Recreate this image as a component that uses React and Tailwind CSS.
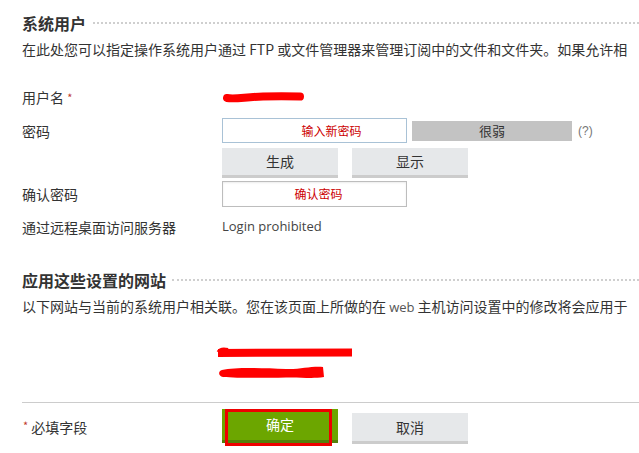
export default function App() {
  return (
    <div className="w-[639px] h-[453px] overflow-hidden bg-white text-[#333] font-['Noto_Sans_CJK_SC','Noto_Sans',sans-serif]">
      <div className="pl-[22px]">
        {/* Section 1 heading */}
        <div className="mt-[14px] h-[18px] flex items-center">
          <span className="text-[16px] leading-[18px] font-bold text-[#333]">系统用户</span>
          <div className="flex-1 ml-[7px] border-t-2 border-dotted border-[#cfcfcf]" />
        </div>
        <div className="mt-[7px] h-[20px] leading-[20px] text-[14px] whitespace-nowrap overflow-hidden text-[#333]">
          在此处您可以指定操作系统用户通过 FTP 或文件管理器来管理订阅中的文件和文件夹。如果允许相
        </div>

        {/* Username */}
        <div className="mt-[28px] h-[20px] flex items-center">
          <div className="w-[200px] text-[14px] leading-[20px]">
            用户名 <span className="text-[#c0392b] text-[11px] align-top">*</span>
          </div>
          <svg width="82" height="14" viewBox="0 0 82 14" className="ml-[1px]">
            <path d="M4 8 C 12 9.5, 22 7, 40 6.5 C 55 6, 68 6.2, 77 6.5" stroke="#ff0000" strokeWidth="8" strokeLinecap="round" fill="none" />
          </svg>
        </div>

        {/* Password */}
        <div className="mt-[11px] h-[25px] flex items-center">
          <div className="w-[200px] text-[14px] leading-[20px]">密码</div>
          <div className="w-[185px] h-[25px] border border-[#a9c2d6] bg-white flex items-center justify-center pl-[34px] text-[12px] text-[#cc0000]">
            输入新密码
          </div>
          <div className="ml-[5px] w-[160px] h-[20px] bg-[#c3c3c3] flex items-center justify-center text-[13px] text-[#333]">
            很弱
          </div>
          <span className="ml-[6px] text-[12px] text-[#777] font-['Liberation_Sans',sans-serif]">(?)</span>
        </div>

        {/* Generate / Show */}
        <div className="mt-[5px] h-[30px] flex">
          <div className="w-[200px]" />
          <div className="w-[116px] h-[30px] bg-[#e6e8ea] border-b-[3px] border-[#cccccc] flex items-center justify-center text-[14px] text-[#333]">
            生成
          </div>
          <div className="ml-[14px] w-[116px] h-[30px] bg-[#e6e8ea] border-b-[3px] border-[#cccccc] flex items-center justify-center text-[14px] text-[#333]">
            显示
          </div>
        </div>

        {/* Confirm */}
        <div className="mt-[3px] h-[26px] flex items-center">
          <div className="w-[200px] text-[14px] leading-[20px]">确认密码</div>
          <div className="w-[185px] h-[26px] border border-[#bdbdbd] bg-white shadow-[inset_0_1px_2px_rgba(0,0,0,0.08)] flex items-center justify-center pl-[8px] text-[12px] text-[#cc0000]">
            确认密码
          </div>
        </div>

        {/* Remote desktop */}
        <div className="mt-[10px] h-[20px] flex items-center">
          <div className="w-[200px] text-[14px] leading-[20px]">通过远程桌面访问服务器</div>
          <div className="text-[13px] text-[#444] font-['Open_Sans',sans-serif]">Login prohibited</div>
        </div>

        {/* Section 2 heading */}
        <div className="mt-[34px] h-[18px] flex items-center">
          <span className="text-[16px] leading-[18px] font-bold text-[#333]">应用这些设置的网站</span>
          <div className="flex-1 ml-[6px] border-t-2 border-dotted border-[#cfcfcf]" />
        </div>
        <div className="mt-[7px] h-[20px] leading-[20px] text-[14px] whitespace-nowrap overflow-hidden text-[#333]">
          以下网站与当前的系统用户相关联。您在该页面上所做的在 <span className="text-[#555] font-['Open_Sans',sans-serif] text-[13px]">web</span> 主机访问设置中的修改将会应用于
        </div>

        {/* Redacted sites */}
        <div className="mt-[31px] h-[34px] ml-[194px]">
          <svg width="140" height="34" viewBox="0 0 140 34">
            <path d="M2 6 L136 5.5" stroke="#ff0000" strokeWidth="8" strokeLinecap="butt" fill="none" />
            <path d="M2 5 C 4 1.5, 8 1.5, 12 2.5" stroke="#ff0000" strokeWidth="3" fill="none" />
            <path d="M6 23 C 20 20, 45 21, 70 22 C 85 22.5, 95 19, 107 20 L108 30 C 95 32, 85 30, 70 30.5 C 45 31, 20 31, 7 30 C 2 29, 2 24, 6 23 Z" fill="#ff0000" />
          </svg>
        </div>

        {/* Divider */}
        <div className="mt-[21px] border-t border-[#cccccc]" />

        {/* Footer */}
        <div className="mt-[6px] h-[37px] flex items-start">
          <div className="w-[200px] h-[37px] flex items-center text-[14px]">
            <span className="text-[#c0392b] text-[11px] mr-[3px] -mt-[4px] ml-[1px]">*</span>必填字段
          </div>
          <div className="relative w-[116px] h-[34px] bg-[#6ca600] border-b-[3px] border-[#53800a] flex items-center justify-center text-[14px] text-white">
            确定
            <div className="absolute left-[3px] top-0 w-[107px] h-[37px] border-[3px] border-[#ee0000]" />
          </div>
          <div className="ml-[14px] mt-[4px] w-[116px] h-[31px] bg-[#e6e8ea] border-b-[3px] border-[#cccccc] flex items-center justify-center text-[14px] text-[#333]">
            取消
          </div>
        </div>
      </div>
    </div>
  );
}
